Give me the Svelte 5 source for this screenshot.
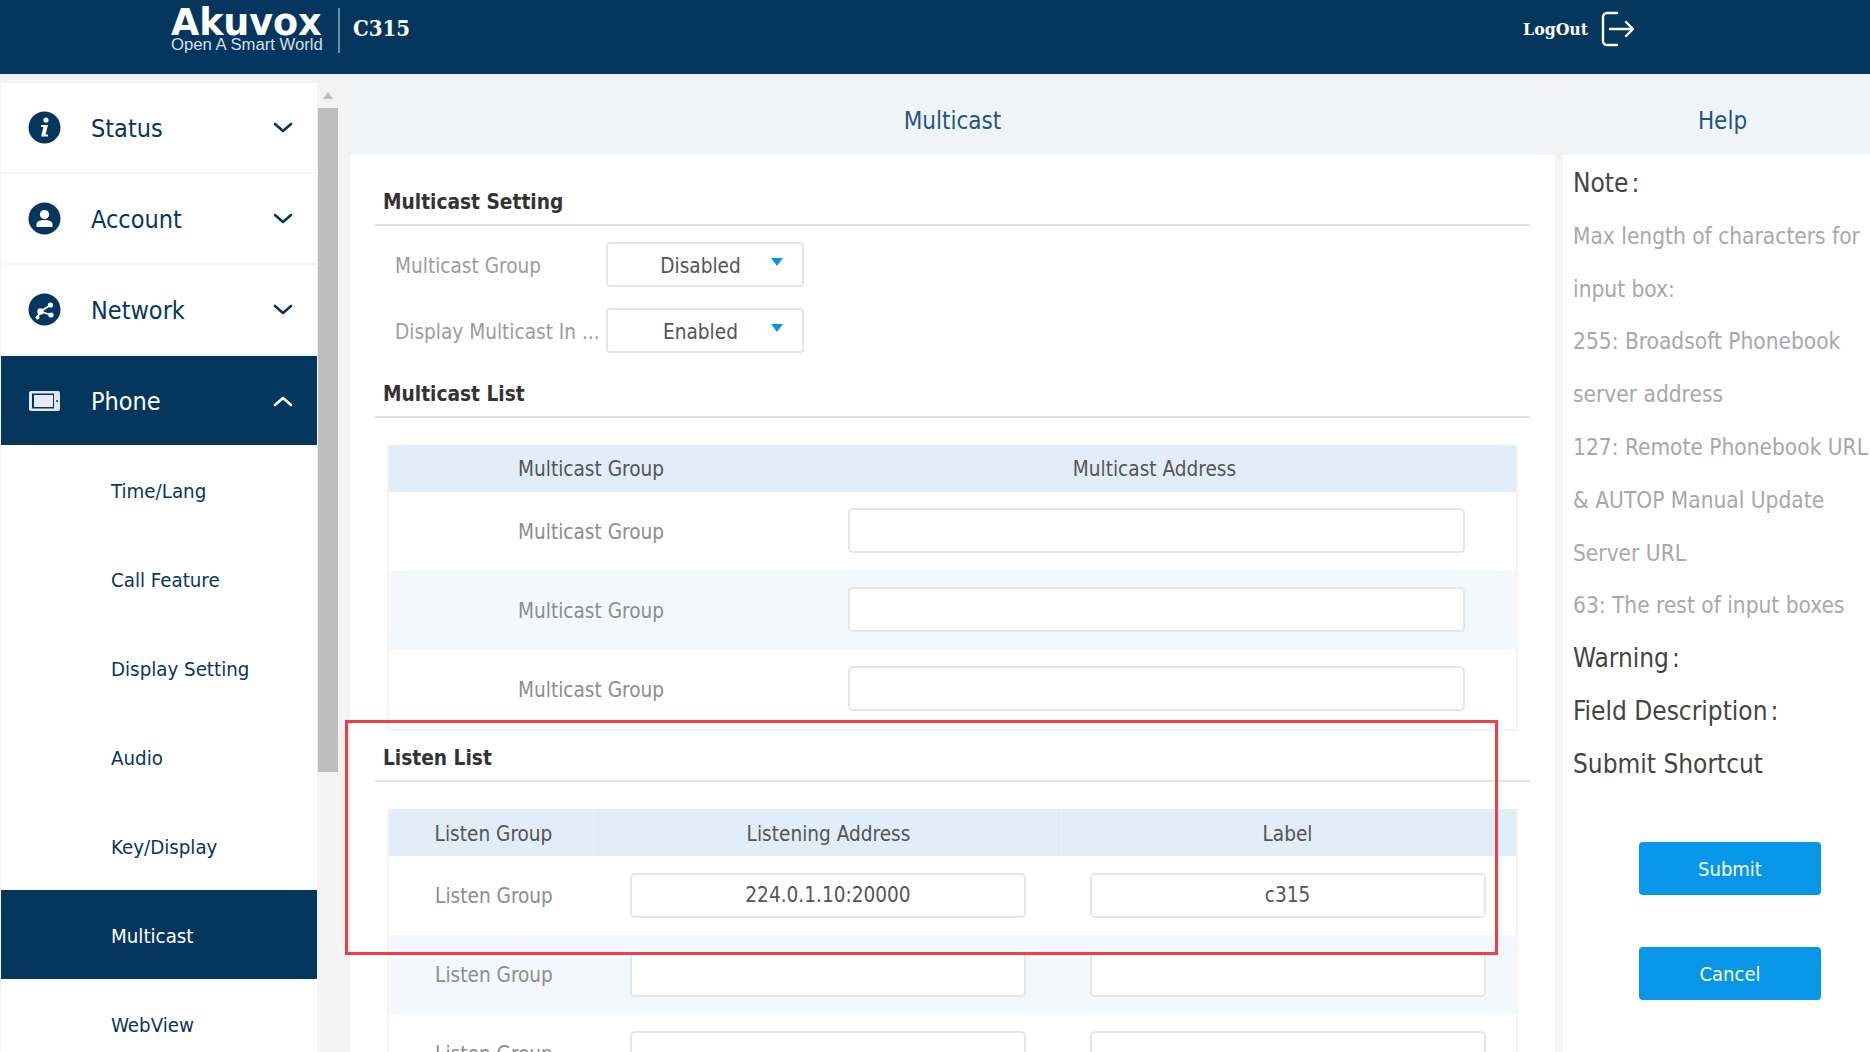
<script>
  const topMenu = [
    { name: 'Status', icon: 'info' },
    { name: 'Account', icon: 'user' },
    { name: 'Network', icon: 'net' }
  ];
  const subMenu = ['Time/Lang', 'Call Feature', 'Display Setting', 'Audio', 'Key/Display', 'Multicast', 'WebView'];
  const helpLines = [
    'Max length of characters for',
    'input box:',
    '255: Broadsoft Phonebook',
    'server address',
    '127: Remote Phonebook URL',
    '& AUTOP Manual Update',
    'Server URL',
    '63: The rest of input boxes'
  ];
  const listenRows = [
    { address: '224.0.1.10:20000', label: 'c315' },
    { address: '', label: '' },
    { address: '', label: '' }
  ];
</script>

<div class="page">
  <header class="topbar">
    <div class="logo">
      <div class="brand">Akuvox</div>
      <div class="tagline">Open A Smart World</div>
    </div>
    <div class="model">C315</div>
    <div class="logout">
      <span>LogOut</span>
      <svg width="34" height="36" viewBox="0 0 34 36" fill="none" stroke="#fff" stroke-width="2.4" stroke-linecap="round" stroke-linejoin="round">
        <path d="M16 2H6a4 4 0 0 0-4 4v24a4 4 0 0 0 4 4h10" />
        <path d="M9 18h23M25 11l7 7-7 7" />
      </svg>
    </div>
  </header>

  <div class="layout">
    <nav class="sidebar">
      {#each topMenu as item}
        <div class="menu-item">
          <svg class="menu-icon" width="33" height="33" viewBox="0 0 33 33">
            <circle cx="16.5" cy="16.5" r="16" fill="#05375e" />
            {#if item.icon === 'info'}
              <circle cx="18" cy="9" r="2.6" fill="#fff" />
              <path d="M13 14h7l-2.4 9.5h2.4v2h-7l2.4-9.5H13z" fill="#fff" />
            {:else if item.icon === 'user'}
              <circle cx="16.5" cy="12.5" r="4.6" fill="#fff" />
              <path d="M8.5 25v-2.5c0-2.8 3-4.5 8-4.5s8 1.700 8 4.500V25z" fill="#fff" />
            {:else}
              <path d="M12.500 18.500l10-6.500M12.500 18.500l10.500 3.500M12.500 18.500l-3 6" stroke="#fff" stroke-width="1.800" />
              <circle cx="12.500" cy="18.500" r="3.200" fill="#fff" />
              <circle cx="22.500" cy="12" r="2.600" fill="#fff" />
              <circle cx="23" cy="22" r="2.600" fill="#fff" />
              <circle cx="9.500" cy="24.500" r="2" fill="#fff" />
            {/if}
          </svg>
          <span>{item.name}</span>
          <svg class="chev" width="20" height="12" viewBox="0 0 20 12" fill="none" stroke="#05375e" stroke-width="2.600" stroke-linecap="round" stroke-linejoin="round">
            <path d="M2 2l8 7 8-7" />
          </svg>
        </div>
      {/each}
      <div class="menu-item open">
        <svg class="menu-icon" width="33" height="22" viewBox="0 0 33 22">
          <rect x="1" y="1" width="31" height="20" rx="2" fill="#dfe6ec" />
          <rect x="4" y="3.500" width="22" height="15" fill="#05375e" />
          <rect x="6" y="5" width="19" height="12" fill="#fff" opacity="0.9" />
          <circle cx="29" cy="11" r="1" fill="#05375e" />
        </svg>
        <span>Phone</span>
        <svg class="chev" width="20" height="12" viewBox="0 0 20 12" fill="none" stroke="#fff" stroke-width="2.600" stroke-linecap="round" stroke-linejoin="round">
          <path d="M2 10l8-7 8 7" />
        </svg>
      </div>
      {#each subMenu as sub}
        <div class="sub-item" class:active={sub === 'Multicast'}>{sub}</div>
      {/each}
    </nav>

    <div class="scrollbar">
      <div class="arrow"></div>
      <div class="thumb"></div>
    </div>

    <main class="content">
      <div class="pane-title">Multicast</div>
      <div class="pane-body">
        <h3 class="first">Multicast Setting</h3>
        <div class="field">
          <label for="mg">Multicast Group</label>
          <div class="select" id="mg"><span>Disabled</span><i class="caret"></i></div>
        </div>
        <div class="field">
          <label for="dm">Display Multicast In ...</label>
          <div class="select" id="dm"><span>Enabled</span><i class="caret"></i></div>
        </div>

        <h3>Multicast List</h3>
        <div class="table closed">
          <div class="row head multi">
            <div>Multicast Group</div>
            <div>Multicast Address</div>
          </div>
          {#each [0, 1, 2] as i}
            <div class="row multi" class:tint={i === 1}>
              <div class="muted">Multicast Group</div>
              <div class="cell"><div class="input wide"></div></div>
            </div>
          {/each}
        </div>

        <h3 class="listen">Listen List</h3>
        <div class="table">
          <div class="row head listen-row divided">
            <div>Listen Group</div>
            <div>Listening Address</div>
            <div>Label</div>
          </div>
          {#each listenRows as row, i}
            <div class="row listen-row" class:tint={i === 1}>
              <div class="muted">Listen Group</div>
              <div class="cell"><div class="input">{row.address}</div></div>
              <div class="cell"><div class="input">{row.label}</div></div>
            </div>
          {/each}
        </div>
      </div>
      <div class="callout"></div>
    </main>

    <aside class="help">
      <div class="pane-title">Help</div>
      <div class="help-body">
        <p class="strong">Note<span class="colon">:</span></p>
        {#each helpLines as line}
          <p>{line}</p>
        {/each}
        <p class="strong">Warning<span class="colon">:</span></p>
        <p class="strong">Field Description<span class="colon">:</span></p>
        <p class="strong">Submit Shortcut</p>
        <div class="actions">
          <button>Submit</button>
          <button>Cancel</button>
        </div>
      </div>
    </aside>
  </div>
</div>

<style>
  :global(body) {
    margin: 0;
    background: #f3f3f3;
  }

  .page {
    width: 1870px;
    height: 1052px;
    overflow: hidden;
    font-family: "DejaVu Sans", sans-serif;
    font-stretch: condensed;
    font-size: 20.6px;
    color: #555;
  }

  .topbar {
    height: 74px;
    background: #05375e;
    display: flex;
    align-items: flex-start;
    padding-left: 171px;
    box-sizing: border-box;
    color: #fff;
  }

  .logo {
    width: 169px;
    height: 45px;
    margin-top: 8px;
    border-right: 2px solid #6d8ba3;
    box-sizing: border-box;
  }

  .brand {
    font-stretch: normal;
    font-weight: 700;
    font-size: 36.5px;
    line-height: 29px;
    letter-spacing: -0.1px;
  }

  .tagline {
    font-family: "Liberation Sans", sans-serif;
    font-stretch: normal;
    font-size: 16.7px;
    line-height: 16px;
    color: #d5dee6;
  }

  .model {
    font-family: "DejaVu Serif", serif;
    font-stretch: condensed;
    font-weight: 700;
    font-size: 22px;
    line-height: 26px;
    margin: 15px 0 0 13px;
  }

  .logout {
    display: flex;
    align-items: center;
    gap: 13px;
    margin: 11px 0 0 1113px;
    font-family: "DejaVu Serif", serif;
    font-stretch: condensed;
    font-weight: 700;
    font-size: 17.5px;
  }

  .layout {
    display: flex;
    padding-top: 9px;
    align-items: flex-start;
  }

  .sidebar {
    width: 316px;
    margin-left: 1px;
    flex: none;
    color: #05375e;
  }

  .menu-item {
    height: 89px;
    margin-bottom: 2px;
    background: #fff;
    display: flex;
    align-items: center;
    font-size: 25px;
    position: relative;
  }

  .menu-icon {
    margin-left: 27px;
    flex: none;
  }

  .menu-item span {
    margin-left: 30px;
    padding-top: 2px;
    flex: 1;
  }

  .chev {
    margin-right: 24px;
  }

  .menu-item.open {
    background: #05375e;
    color: #fff;
    margin-bottom: 0;
  }

  .sub-item {
    height: 89px;
    padding-top: 2px;
    box-sizing: border-box;
    background: #fff;
    display: flex;
    align-items: center;
    padding-left: 110px;
    font-size: 20.3px;
    color: #05375e;
  }

  .sub-item.active {
    background: #05375e;
    color: #fff;
  }

  .scrollbar {
    width: 20px;
    margin-left: 1px;
    flex: none;
    display: flex;
    flex-direction: column;
    align-items: center;
  }

  .arrow {
    width: 0;
    height: 0;
    margin: 9px 0 9px;
    border: 5px solid transparent;
    border-top: 0;
    border-bottom: 7px solid #bdbdbd;
  }

  .thumb {
    width: 20px;
    height: 664px;
    background: #bdbdbd;
  }

  .content {
    width: 1205px;
    margin-left: 12px;
    flex: none;
    background: #fff;
    position: relative;
    height: 969px;
  }

  .pane-title {
    height: 72px;
    padding-top: 3px;
    box-sizing: border-box;
    background: #f1f4f7;
    display: flex;
    align-items: center;
    justify-content: center;
    font-size: 24px;
    color: #1f5684;
  }

  .help .pane-title {
    padding-left: 12px;
  }

  .pane-body {
    padding: 0 25px;
  }

  h3 {
    margin: 21px 0 0;
    height: 44px;
    padding: 8px 0 0 8px;
    box-sizing: border-box;
    border-bottom: 2px solid #e4e4e4;
    font-size: 20.7px;
    line-height: 25px;
    font-weight: 700;
    color: #333;
  }

  h3.first {
    margin-top: 27px;
  }

  h3.listen {
    margin-top: 7px;
  }

  .field {
    display: flex;
    align-items: center;
    margin-top: 16px;
    padding-left: 20px;
  }

  .field + .field {
    margin-top: 21px;
  }

  .field label {
    width: 211px;
    flex: none;
    padding-top: 2px;
    color: #9c9c9c;
    white-space: nowrap;
  }

  .select {
    width: 198px;
    height: 45px;
    padding-top: 2px;
    box-sizing: border-box;
    border: 2px solid #e6e6e6;
    border-radius: 4px;
    display: flex;
    align-items: center;
    justify-content: center;
    position: relative;
  }

  .select span {
    margin-right: 9px;
  }

  .caret {
    position: absolute;
    right: 19px;
    top: 14px;
    width: 0;
    height: 0;
    border: 6.5px solid transparent;
    border-top: 8px solid #0796e8;
    border-bottom: 0;
  }

  .table {
    margin: 27px 12px 0;
    border-left: 2px solid #f4f4f4;
    border-right: 2px solid #f4f4f4;
  }

  .table.closed {
    border-bottom: 2px solid #f4f4f4;
  }

  .row {
    display: grid;
    height: 79px;
    align-items: center;
    text-align: center;
  }

  .row.head {
    height: 47px;
    background: #e1edf7;
  }

  .row.tint {
    background: #f2f8fd;
  }

  .row.multi {
    grid-template-columns: 404px 1fr;
  }

  .row.multi .cell {
    padding-left: 3px;
  }

  .row.listen-row {
    grid-template-columns: 210px 460px 1fr;
  }

  .row.listen-row .cell:nth-child(2) {
    padding-right: 2px;
  }

  .row.head.divided > div {
    height: 100%;
    padding-top: 2px;
    box-sizing: border-box;
    display: flex;
    align-items: center;
    justify-content: center;
    border-right: 1px solid #dce9f4;
  }

  .row.head.divided > div:last-child {
    border-right: 0;
  }

  .muted {
    color: #8d8d8d;
  }

  .cell {
    display: flex;
    justify-content: center;
  }

  .input {
    width: 396px;
    height: 45px;
    margin-top: -1px;
    box-sizing: border-box;
    background: #fff;
    border: 2px solid #e6e6e6;
    border-radius: 5px;
    display: flex;
    align-items: center;
    justify-content: center;
  }

  .input.wide {
    width: 617px;
    margin-top: -3px;
  }

  .callout {
    position: absolute;
    left: -5px;
    top: 637px;
    width: 1153px;
    height: 235px;
    box-sizing: border-box;
    border: 3px solid #f23c46;
  }

  .help {
    width: 307px;
    margin-left: 8px;
    flex: none;
    background: #fff;
    height: 969px;
    overflow: hidden;
  }

  .help-body {
    padding: 2px 0 0 10px;
  }

  .help-body p {
    margin: 0;
    height: 52.8px;
    line-height: 52.8px;
    font-size: 22.5px;
    color: #a8a8a8;
    white-space: nowrap;
  }

  .help-body p.strong {
    font-size: 26px;
    color: #444;
  }

  .colon {
    margin-left: 3px;
  }

  .actions {
    display: flex;
    flex-direction: column;
    gap: 52px;
    padding: 51px 0 0 66px;
  }

  button {
    width: 182px;
    height: 53px;
    padding-top: 2px;
    border: 0;
    border-radius: 4px;
    background: #0796e8;
    color: #fff;
    font: inherit;
    font-size: 20px;
  }
</style>
